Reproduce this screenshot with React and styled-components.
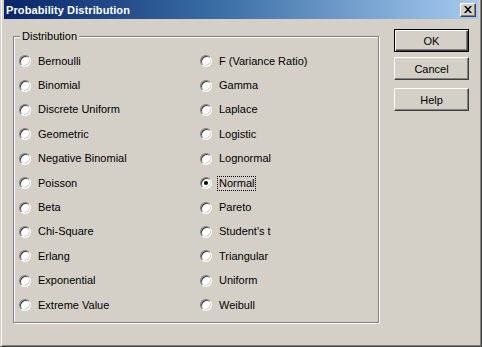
import React from "react";
import styled, { createGlobalStyle } from "styled-components";

const Global = createGlobalStyle`
  html, body {
    margin: 0;
    padding: 0;
    background: #d4d0c8;
  }
  body {
    font-family: "Liberation Sans", Arial, sans-serif;
    font-size: 11px;
    color: #000;
  }
`;

const Window = styled.div`
  width: 482px;
  height: 347px;
  box-sizing: border-box;
  background: #d4d0c8;
  border-style: solid;
  border-width: 0 1px 1px 1px;
  border-color: #d4d0c8 #404040 #404040 #d4d0c8;
  box-shadow: inset 1px 0 0 #ffffff, inset -1px -1px 0 #808080;
  padding: 0 3px 3px 3px;
  display: flex;
  flex-direction: column;
`;

const TitleBar = styled.div`
  height: 19px;
  display: flex;
  align-items: center;
  justify-content: space-between;
  padding: 0 2px 0 2px;
  background: linear-gradient(to right, #0a246a 0%, #3a6ea5 45%, #a6caf0 100%);
`;

const Title = styled.span`
  color: #ffffff;
  font-weight: bold;
  font-size: 11px;
  letter-spacing: 0.1px;
`;

const CloseButton = styled.div`
  width: 16px;
  height: 14px;
  box-sizing: border-box;
  background: #d4d0c8;
  border: 1px solid;
  border-color: #ffffff #404040 #404040 #ffffff;
  box-shadow: inset -1px -1px 0 #808080;
  display: flex;
  align-items: center;
  justify-content: center;
`;

const Body = styled.div`
  display: flex;
  align-items: flex-start;
  padding: 10px 0 0 9px;
`;

const Group = styled.div`
  position: relative;
  width: 366px;
  height: 287px;
  box-sizing: border-box;
  margin-top: 7px;
  border: 1px solid #808080;
  box-shadow: inset 1px 1px 0 #ffffff, 1px 1px 0 #ffffff;
  padding: 12px 0 0 5px;
`;

const Legend = styled.span`
  position: absolute;
  top: -7px;
  left: 6px;
  padding: 0 2px;
  background: #d4d0c8;
  line-height: 13px;
`;

const Options = styled.div`
  display: grid;
  grid-template-columns: 181px 1fr;
  grid-template-rows: repeat(11, 24.4px);
  grid-auto-flow: column;
`;

const Option = styled.label`
  display: flex;
  align-items: center;
  gap: 7px;
  white-space: nowrap;
`;

const Radio = styled.span`
  position: relative;
  width: 12px;
  height: 12px;
  box-sizing: border-box;
  border-radius: 50%;
  background: #ffffff;
  border: 1px solid;
  border-color: #808080 #ffffff #ffffff #808080;
  box-shadow: inset 1px 1px 0 #404040, inset -1px -1px 0 #d4d0c8;
  flex: none;

  &::after {
    content: "";
    display: ${(p) => (p.$checked ? "block" : "none")};
    position: absolute;
    left: 3px;
    top: 3px;
    width: 4px;
    height: 4px;
    border-radius: 50%;
    background: #000;
  }
`;

const OptionText = styled.span`
  line-height: 13px;
  padding: 0 1px;
  margin-left: -1px;
  outline: ${(p) => (p.$focused ? "1px dotted #000" : "none")};
`;

const Buttons = styled.div`
  display: flex;
  flex-direction: column;
  margin-left: 15px;
`;

const Button = styled.div`
  width: 75px;
  height: 23px;
  box-sizing: border-box;
  margin-top: ${(p) => p.$gap || 0}px;
  display: flex;
  align-items: center;
  justify-content: center;
  background: #d4d0c8;
  border: 1px solid;
  border-color: ${(p) =>
    p.$default ? "#000000" : "#ffffff #404040 #404040 #ffffff"};
  box-shadow: ${(p) =>
    p.$default
      ? "inset 1px 1px 0 #ffffff, inset -1px -1px 0 #404040, inset -2px -2px 0 #808080"
      : "inset -1px -1px 0 #808080"};
`;

const left = [
  "Bernoulli",
  "Binomial",
  "Discrete Uniform",
  "Geometric",
  "Negative Binomial",
  "Poisson",
  "Beta",
  "Chi-Square",
  "Erlang",
  "Exponential",
  "Extreme Value",
];

const right = [
  "F (Variance Ratio)",
  "Gamma",
  "Laplace",
  "Logistic",
  "Lognormal",
  "Normal",
  "Pareto",
  "Student's t",
  "Triangular",
  "Uniform",
  "Weibull",
];

export default function App() {
  const selected = "Normal";
  return (
    <>
      <Global />
      <Window>
        <TitleBar>
          <Title>Probability Distribution</Title>
          <CloseButton>
            <svg width="8" height="7" viewBox="0 0 8 7">
              <path
                d="M0 0h2l2 2.2L6 0h2L5 3.5 8 7H6L4 4.8 2 7H0l3-3.5z"
                fill="#000"
              />
            </svg>
          </CloseButton>
        </TitleBar>
        <Body>
          <Group>
            <Legend>Distribution</Legend>
            <Options>
              {[...left, ...right].map((name) => (
                <Option key={name}>
                  <Radio $checked={name === selected} />
                  <OptionText $focused={name === selected}>{name}</OptionText>
                </Option>
              ))}
            </Options>
          </Group>
          <Buttons>
            <Button $default>OK</Button>
            <Button $gap={5}>Cancel</Button>
            <Button $gap={8}>Help</Button>
          </Buttons>
        </Body>
      </Window>
    </>
  );
}
